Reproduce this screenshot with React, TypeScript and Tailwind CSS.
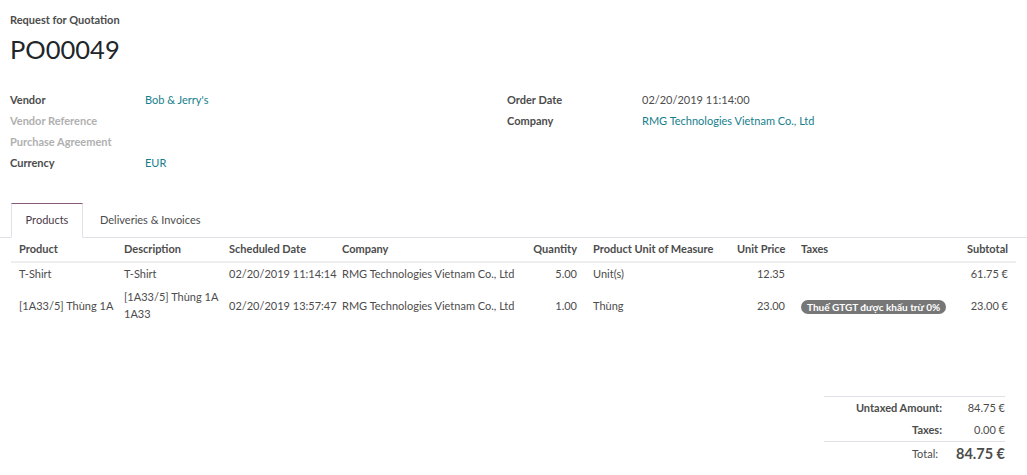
import React from 'react';

const font = { fontFamily: 'Lato, "Open Sans", sans-serif' };

function Field({ label, value, muted, link }: { label: string; value?: string; muted?: boolean; link?: boolean }) {
  return (
    <div className="flex h-[21px] items-center">
      <div className={`w-[135px] font-bold ${muted ? 'text-[#b0b0b0]' : 'text-[#4c4c4c]'}`}>{label}</div>
      {value && <div className={link ? 'text-[#15808c]' : 'text-[#4c4c4c]'}>{value}</div>}
    </div>
  );
}

const rows = [
  {
    product: 'T-Shirt',
    description: ['T-Shirt'],
    date: '02/20/2019 11:14:14',
    company: 'RMG Technologies Vietnam Co., Ltd',
    qty: '5.00',
    uom: 'Unit(s)',
    price: '12.35',
    tax: '',
    subtotal: '61.75 €',
  },
  {
    product: '[1A33/5] Thùng 1A',
    description: ['[1A33/5] Thùng 1A', '1A33'],
    date: '02/20/2019 13:57:47',
    company: 'RMG Technologies Vietnam Co., Ltd',
    qty: '1.00',
    uom: 'Thùng',
    price: '23.00',
    tax: 'Thuế GTGT được khấu trừ 0%',
    subtotal: '23.00 €',
  },
];

export default function App() {
  return (
    <div className="min-h-[475px] w-[1027px] bg-white text-[11px] text-[#4c4c4c]" style={font}>
      {/* Title */}
      <div className="px-[10px] pt-[12px]">
        <div className="font-bold leading-[16px]">Request for Quotation</div>
        <div className="mt-[5px] text-[25.5px] leading-[32px] text-[#212529]">PO00049</div>
      </div>

      {/* Fields */}
      <div className="mt-[25px] flex px-[10px]">
        <div className="w-[497px]">
          <Field label="Vendor" value="Bob & Jerry's" link />
          <Field label="Vendor Reference" muted />
          <Field label="Purchase Agreement" muted />
          <Field label="Currency" value="EUR" link />
        </div>
        <div>
          <Field label="Order Date" value="02/20/2019 11:14:00" />
          <Field label="Company" value="RMG Technologies Vietnam Co., Ltd" link />
        </div>
      </div>

      {/* Tabs */}
      <div className="mt-[29px] flex border-b border-[#dee2e6] pl-[11px]">
        <div className="-mb-px flex h-[35px] w-[72px] items-center justify-center border border-b-white border-[#dee2e6] border-t-[#875a7b] text-[#4a3a48]">
          Products
        </div>
        <div className="flex h-[34px] items-center px-[17px]">Deliveries &amp; Invoices</div>
      </div>

      {/* Lines table */}
      <div className="pl-[11px]">
        <table className="w-[1005px] table-fixed border-collapse">
          <colgroup>
            <col className="w-[105px]" />
            <col className="w-[105px]" />
            <col className="w-[113px]" />
            <col className="w-[186px]" />
            <col className="w-[65px]" />
            <col className="w-[144px]" />
            <col className="w-[64px]" />
            <col className="w-[157px]" />
            <col className="w-[66px]" />
          </colgroup>
          <thead>
            <tr className="h-[24px] border-b-2 border-[#eeeeee] font-bold">
              <th className="px-2 text-left font-bold">Product</th>
              <th className="px-2 text-left font-bold">Description</th>
              <th className="px-2 text-left font-bold">Scheduled Date</th>
              <th className="px-2 text-left font-bold">Company</th>
              <th className="px-2 text-right font-bold">Quantity</th>
              <th className="whitespace-nowrap px-2 text-left font-bold">Product Unit of Measure</th>
              <th className="whitespace-nowrap px-2 text-right font-bold">Unit Price</th>
              <th className="px-2 text-left font-bold">Taxes</th>
              <th className="px-2 text-right font-bold">Subtotal</th>
            </tr>
          </thead>
          <tbody>
            {rows.map((r, i) => (
              <tr key={i} className={`leading-[17px] ${i === 0 ? 'h-[22px]' : 'h-[42px]'}`}>
                <td className="whitespace-nowrap px-2 align-middle">{r.product}</td>
                <td className="px-2 align-middle">
                  {r.description.map((d, j) => (
                    <div key={j} className="whitespace-nowrap">{d}</div>
                  ))}
                </td>
                <td className="whitespace-nowrap px-2">{r.date}</td>
                <td className="whitespace-nowrap px-2">{r.company}</td>
                <td className="px-2 text-right">{r.qty}</td>
                <td className="px-2">{r.uom}</td>
                <td className="px-2 text-right">{r.price}</td>
                <td className="px-2">
                  {r.tax && (
                    <span className="inline-block whitespace-nowrap rounded-full bg-[#777777] px-[6px] align-middle text-[10px] font-bold leading-[14px] text-white">
                      {r.tax}
                    </span>
                  )}
                </td>
                <td className="whitespace-nowrap px-2 text-right">{r.subtotal}</td>
              </tr>
            ))}
          </tbody>
        </table>
      </div>

      {/* Totals */}
      <div className="mt-[70px] flex justify-end pr-[22px]">
        <table className="w-[181px] border-collapse">
          <tbody>
            <tr className="h-[23px] border-t border-[#dee2e6]">
              <td className="pr-2 text-right font-bold">Untaxed Amount:</td>
              <td className="w-[55px] whitespace-nowrap text-right">84.75 €</td>
            </tr>
            <tr className="h-[22px]">
              <td className="pr-2 text-right font-bold">Taxes:</td>
              <td className="whitespace-nowrap text-right">0.00 €</td>
            </tr>
            <tr className="h-[24px] border-t border-[#dee2e6]">
              <td className="pr-3 text-right">Total:</td>
              <td className="whitespace-nowrap text-right text-[14.5px] font-bold">84.75 €</td>
            </tr>
          </tbody>
        </table>
      </div>
    </div>
  );
}
